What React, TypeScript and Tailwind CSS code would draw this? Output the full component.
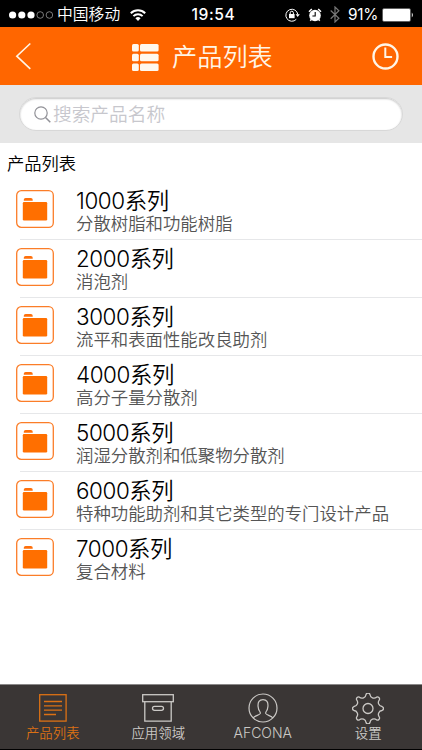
import { useState } from 'react';

const seriesList = [
  { name: '1000系列', desc: '分散树脂和功能树脂' },
  { name: '2000系列', desc: '消泡剂' },
  { name: '3000系列', desc: '流平和表面性能改良助剂' },
  { name: '4000系列', desc: '高分子量分散剂' },
  { name: '5000系列', desc: '润湿分散剂和低聚物分散剂' },
  { name: '6000系列', desc: '特种功能助剂和其它类型的专门设计产品' },
  { name: '7000系列', desc: '复合材料' },
];

// 齿轮轮廓: 8个圆齿, 齿间为内凹弧线
const gearPath = () => {
  const point = (deg: number) => {
    const rad = (deg * Math.PI) / 180;
    return `${(16 + 14.2 * Math.sin(rad)).toFixed(2)} ${(15.5 - 14.2 * Math.cos(rad)).toFixed(2)}`;
  };
  let d = `M${point(-8)}`;
  for (let i = 0; i < 8; i++) {
    d += `A2.1 2.1 0 0 1 ${point(i * 45 + 8)}A4 4 0 0 0 ${point(i * 45 + 37)}`;
  }
  return d + 'z';
};

function StatusBar() {
  return (
    <div className="flex h-[27px] items-center bg-black pt-[2px] pl-[9px] text-white">
      <svg width="44" height="8" viewBox="0 0 44 8" className="shrink-0">
        <circle cx="3.6" cy="4" r="3.6" fill="#fff" />
        <circle cx="12.8" cy="4" r="3.6" fill="#fff" />
        <circle cx="22" cy="4" r="3.6" fill="#fff" />
        <circle cx="31.2" cy="4" r="3.3" fill="none" stroke="#aaa" strokeWidth="0.7" />
        <circle cx="40.4" cy="4" r="3.3" fill="none" stroke="#aaa" strokeWidth="0.7" />
      </svg>
      <span className="mt-[1px] ml-[4px] w-[64px] text-[15.8px] leading-[20px] font-[350] whitespace-nowrap">中国移动</span>
      <svg width="16" height="12" viewBox="0 0 16 12" className="ml-[9px] shrink-0" fill="none" stroke="#fff" strokeWidth="2">
        <path d="M0.8 4.2a10.2 10.2 0 0 1 14.4 0" />
        <path d="M3.4 7.1a6.5 6.5 0 0 1 9.2 0" />
        <path d="M8 12L5.4 9.3a3.7 3.7 0 0 1 5.2 0z" fill="#fff" stroke="none" />
      </svg>
      <span className="ml-[45.5px] w-[46px] text-[15.6px] leading-[20px] font-medium tracking-[0.6px] whitespace-nowrap">19:54</span>
      <svg width="15" height="14" viewBox="0 0 15 14" className="ml-[47.5px] shrink-0" fill="none" stroke="#fff">
        <path d="M11.3 11.3A6 6 0 1 1 12.8 6.4" />
        <path d="M10.6 6.2h4.2l-2.1 2.8z" fill="#fff" stroke="none" />
        <rect x="4" y="6" width="5.6" height="4.2" fill="#fff" stroke="none" />
        <path d="M5.2 6V4.8a1.6 1.6 0 0 1 3.2 0V6" />
      </svg>
      <svg width="14" height="14" viewBox="0 0 14 14" className="ml-[8px] shrink-0">
        <circle cx="7" cy="7.5" r="5.8" fill="#fff" />
        <path d="M1 3.8L3.8 1M13 3.8L10.2 1M3.2 11.5l-.9 1.2M10.8 11.5l.9 1.2" stroke="#fff" strokeWidth="1.5" />
        <path d="M7.2 4v4H4.4" fill="none" stroke="#000" strokeWidth="1.1" />
      </svg>
      <svg width="10" height="17" viewBox="0 0 10 17" className="ml-[8px] shrink-0" fill="none" stroke="#777" strokeWidth="1.2">
        <path d="M0.7 4.5l8.2 7.8L5 16V1l3.9 3.8-8.2 7.9" />
      </svg>
      <span className="ml-[8px] w-[32px] text-[15.4px] leading-[20px] tracking-[-0.3px] whitespace-nowrap">91%</span>
      <svg width="32" height="14" viewBox="0 0 32 14" className="ml-[2px] shrink-0">
        <rect x="0.5" y="0.5" width="28" height="13" rx="1.5" fill="none" stroke="#888" strokeWidth="0.7" />
        <rect x="1" y="1" width="27" height="12" rx="0.8" fill="#fff" />
        <path d="M29.8 4.5q2 2.5 0 5z" fill="#fff" />
      </svg>
    </div>
  );
}

function Header() {
  return (
    <div className="flex h-[58px] items-center bg-[#ff6600] pl-[15px] text-[#fff5e6]">
      <svg width="16" height="28" viewBox="0 0 16 28" className="shrink-0" fill="none" stroke="currentColor" strokeWidth="1.6">
        <path d="M15.3 1.5L1.8 14.2L15.3 26.8" />
      </svg>
      <svg width="27" height="27" viewBox="0 0 27 27" className="mt-[2px] ml-[101px] shrink-0" fill="#fff8ee">
        <rect x="0" y="0" width="6.8" height="7.6" rx="1.5" />
        <rect x="8" y="0" width="18.6" height="7.6" rx="1.5" />
        <rect x="0" y="9.7" width="6.8" height="7.6" rx="1.5" />
        <rect x="8" y="9.7" width="18.6" height="7.6" rx="1.5" />
        <rect x="0" y="19.4" width="6.8" height="7.6" rx="1.5" />
        <rect x="8" y="19.4" width="18.6" height="7.6" rx="1.5" />
      </svg>
      <span className="mt-[2px] ml-[13px] w-[101px] text-[25.2px] leading-[30px] font-[350] whitespace-nowrap">产品列表</span>
      <svg width="27" height="27" viewBox="0 0 27 27" className="ml-[99px] shrink-0" fill="none" stroke="currentColor" strokeWidth="2.4">
        <circle cx="13.5" cy="13.5" r="12" />
        <path d="M13.3 4.6v9.4h6.8" strokeWidth="2" />
      </svg>
    </div>
  );
}

function FolderIcon() {
  return (
    <svg width="38" height="38" viewBox="0 0 38 38" className="mt-[9px] shrink-0">
      <rect x="0.7" y="0.7" width="36.6" height="36.6" rx="4.6" fill="#fff" stroke="#fb7d28" strokeWidth="1.3" />
      <path d="M7.8 10.8V9.8q0-1.8 1.8-1.8h5.3q1.8 0 1.8 1.8v1z" fill="#ff6f0a" />
      <rect x="6.8" y="12" width="24.4" height="18.4" rx="1.2" fill="#ff6f00" />
    </svg>
  );
}

function App() {
  const [keyword, setKeyword] = useState('');
  const [tab, setTab] = useState('list');

  const tabColor = (name: string) => (tab === name ? 'text-[#dc7114]' : 'text-[#cbc9c6]');

  return (
    <div className="flex h-[750px] w-[422px] flex-col overflow-hidden bg-white font-[Inter,'Noto_Sans_CJK_SC',sans-serif]">
      <StatusBar />
      <Header />

      <div className="h-[58px] bg-[#e6e6e6] pt-[12px] pr-[19px] pl-[19px]">
        <div className="flex h-[34px] items-center rounded-full border border-[#d8d8d8] bg-white pl-[14px] shadow-[inset_0_1px_2px_#c4c4c4]">
          <svg width="17" height="17" viewBox="0 0 17 17" className="shrink-0" fill="none" stroke="#919197" strokeWidth="1.2">
            <circle cx="7" cy="7" r="6.2" />
            <path d="M11.5 11.5l4.8 4.8" strokeWidth="1.5" />
          </svg>
          <input
            type="text"
            className="ml-[2px] h-[30px] w-[320px] bg-transparent text-[18.7px] font-[350] outline-none placeholder:text-[#c7c7cd]"
            placeholder="搜索产品名称"
            value={keyword}
            onChange={(e) => setKeyword(e.target.value)}
          />
        </div>
      </div>

      <div className="h-[38px] pt-[9px] pl-[7px] text-[17.3px] leading-[24px] font-[350] text-black">产品列表</div>

      <div className="flex-1">
        {seriesList.map((item, index) => (
          <div key={item.name} className="flex h-[58px] pl-[16px]">
            <FolderIcon />
            <div className="relative ml-[22px] flex-1 pt-[7px]">
              <div className="text-[22.4px] leading-[25px] font-[350] tracking-[-0.4px] whitespace-nowrap text-black">{item.name}</div>
              <div className="pt-[1px] text-[17.4px] leading-[20px] font-[350] whitespace-nowrap text-[#555]">{item.desc}</div>
              {index < seriesList.length - 1 && (
                <div className="absolute right-0 bottom-[-1px] left-[-56px] h-px bg-[#e6e7e9]"></div>
              )}
            </div>
          </div>
        ))}
      </div>

      <div className="grid h-[66px] grid-cols-4 border-t border-b border-t-[#8a8888] border-b-black bg-[#3a3635] text-[13.4px] leading-[18px] font-[350]">
        <button className={`flex flex-col items-center pt-[9px] ${tabColor('list')}`} onClick={() => setTab('list')}>
          <svg width="28" height="28" viewBox="0 0 28 28" fill="none" stroke="currentColor" strokeWidth="1.3">
            <rect x="0.7" y="0.7" width="26.4" height="26.4" />
            <path d="M5 7.5h18M5 11.8h18M5 16.1h18M5 20.5h12" />
          </svg>
          <span className="mt-[2px]">产品列表</span>
        </button>
        <button className={`flex flex-col items-center pt-[9px] ${tabColor('field')}`} onClick={() => setTab('field')}>
          <svg width="32" height="28" viewBox="0 0 32 28" fill="none" stroke="currentColor" strokeWidth="1.3">
            <rect x="0.7" y="0.7" width="30.6" height="7" />
            <path d="M2.8 7.7v19.4h26.4V7.7" />
            <rect x="10.5" y="12.3" width="11" height="4" rx="2" />
          </svg>
          <span className="mt-[2px]">应用领域</span>
        </button>
        <button className={`flex flex-col items-center pt-[8px] pr-[2px] ${tabColor('afcona')}`} onClick={() => setTab('afcona')}>
          <svg width="30" height="30" viewBox="0 0 30 30" fill="none" stroke="currentColor" strokeWidth="1.2">
            <circle cx="15" cy="15" r="14" />
            <path d="M5.2 25c1-2.2 6.8-3 7.1-4.5.2-1-.2-1.7-.8-2.5-.8-1-1.2-2.6-1.4-4.4-.5-4.5 1.3-7 4.9-7s5.4 2.5 4.900 7c-.2 1.800-.6 3.400-1.400 4.400-.6.8-1 1.500-.8 2.500.3 1.500 6.100 2.300 7.100 4.500" />
          </svg>
          <span className="mt-[1px] text-[14px]">AFCONA</span>
        </button>
        <button className={`flex flex-col items-center pt-[8px] pr-[2px] ${tabColor('setting')}`} onClick={() => setTab('setting')}>
          <svg width="32" height="31" viewBox="0 0 32 31" fill="none" stroke="currentColor" strokeWidth="1.3" strokeLinejoin="round">
            <circle cx="16" cy="15.5" r="5" />
            <path d={gearPath()} />
          </svg>
          <span>设置</span>
        </button>
      </div>
    </div>
  );
}

export default App;
